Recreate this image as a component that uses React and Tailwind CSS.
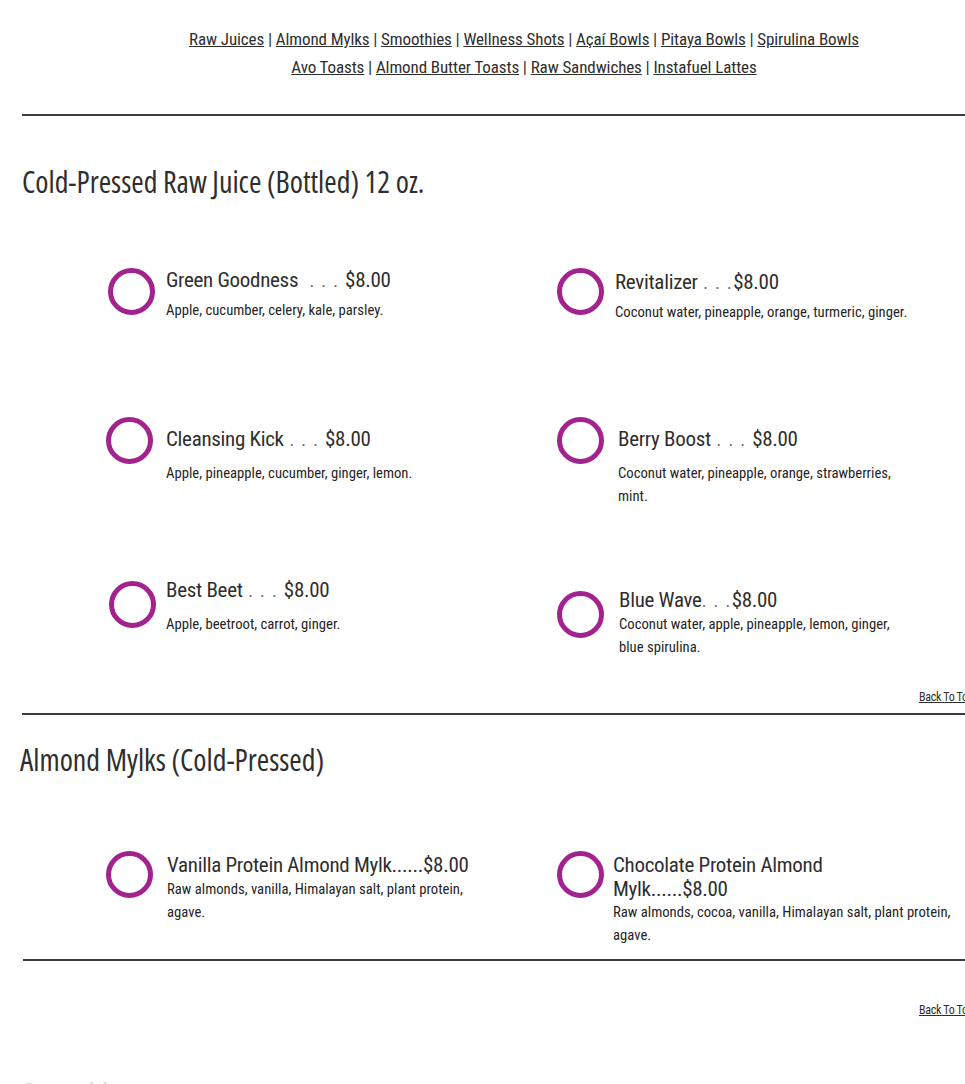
import React from "react";

const FONT = "font-['Roboto_Condensed','Roboto',sans-serif]";
const HEAD_FONT = "font-['Open_Sans',sans-serif] [font-stretch:75%]";

const NAV_ROWS = [
  ["Raw Juices", "Almond Mylks", "Smoothies", "Wellness Shots", "Açaí Bowls", "Pitaya Bowls", "Spirulina Bowls"],
  ["Avo Toasts", "Almond Butter Toasts", "Raw Sandwiches", "Instafuel Lattes"],
];

const SPACED = "text-[#6b6b6b] text-[18px] tracking-[1.5px]";
const SOLID = "text-[#2f2e2e]";

const JUICES = [
  { name: "Green Goodness", dots: "  . . . ", dotCls: SPACED, desc: ["Apple, cucumber, celery, kale, parsley."], circleMl: "ml-[2px]", circleMt: "mt-0", textMl: "ml-[11px]", textMt: "mt-0", descMt: "mt-[6px]" },
  { name: "Revitalizer", dots: " . . .", dotCls: SPACED, desc: ["Coconut water, pineapple, orange, turmeric, ginger."], circleMl: "ml-0", circleMt: "mt-0", textMl: "ml-[11px]", textMt: "mt-[2px]", descMt: "mt-[6px]" },
  { name: "Cleansing Kick", dots: " . . . ", dotCls: SPACED, desc: ["Apple, pineapple, cucumber, ginger, lemon."], circleMl: "ml-0", circleMt: "mt-0", textMl: "ml-[13px]", textMt: "mt-[10px]", descMt: "mt-[10px]" },
  { name: "Berry Boost", dots: " . . . ", dotCls: SPACED, desc: ["Coconut water, pineapple, orange, strawberries,", "mint."], circleMl: "ml-0", circleMt: "mt-0", textMl: "ml-[14px]", textMt: "mt-[10px]", descMt: "mt-[10px]" },
  { name: "Best Beet", dots: " . . . ", dotCls: SPACED, desc: ["Apple, beetroot, carrot, ginger."], circleMl: "ml-[3px]", circleMt: "mt-[3px]", textMl: "ml-[10px]", textMt: "mt-0", descMt: "mt-[10px]" },
  { name: "Blue Wave", dots: ". . .", dotCls: SPACED, desc: ["Coconut water, apple, pineapple, lemon, ginger,", "blue spirulina."], circleMl: "ml-0", circleMt: "mt-[13px]", textMl: "ml-[15px]", textMt: "mt-[10px]", descMt: "mt-0" },
];

const MYLKS = [
  { name: ["Vanilla Protein Almond Mylk"], dots: "......", dotCls: SOLID, desc: ["Raw almonds, vanilla, Himalayan salt, plant protein,", "agave."], circleMl: "ml-0", circleMt: "mt-0", textMl: "ml-[14px]", textMt: "mt-[2px]", descMt: "mt-[1px]" },
  { name: ["Chocolate Protein Almond", "Mylk"], dots: "......", dotCls: SOLID, desc: ["Raw almonds, cocoa, vanilla, Himalayan salt, plant protein,", "agave."], circleMl: "ml-0", circleMt: "mt-0", textMl: "ml-[9px]", textMt: "mt-[2px]", descMt: "mt-0" },
];

function Ring({ className }) {
  return (
    <div className={`w-[47px] h-[47px] shrink-0 rounded-full border-[5px] border-[#a3238e] ${className}`} />
  );
}

function MenuItem({ item }) {
  const nameLines = Array.isArray(item.name) ? item.name : [item.name];
  const last = nameLines.length - 1;
  return (
    <div className="flex items-start">
      <Ring className={`${item.circleMl} ${item.circleMt}`} />
      <div className={`${item.textMl} ${item.textMt} whitespace-nowrap`}>
        <p className="text-[21px] leading-[24px] tracking-[-0.3px] text-[#2f2e2e] whitespace-pre">
          {nameLines.map((l, i) => (
            <React.Fragment key={i}>
              {i > 0 && <br />}
              {l}
              {i === last && (
                <>
                  <span className={item.dotCls}>{item.dots}</span>
                  $8.00
                </>
              )}
            </React.Fragment>
          ))}
        </p>
        <p className={`text-[14.7px] leading-[23px] text-[#262525] ${item.descMt}`}>
          {item.desc.map((l, i) => (
            <React.Fragment key={i}>
              {i > 0 && <br />}
              {l}
            </React.Fragment>
          ))}
        </p>
      </div>
    </div>
  );
}

function Rule({ className = "" }) {
  return <div className={`h-[2px] bg-[#3c3c3c] ${className}`} />;
}

function BackToTop({ className = "" }) {
  return (
    <div className={`pl-[919px] text-[12px] leading-[16px] tracking-[-0.3px] whitespace-nowrap ${className}`}>
      <a href="#" className="underline text-[#2f2e2e]">Back To Top</a>
    </div>
  );
}

export default function App() {
  return (
    <div className={`w-[965px] h-[1084px] overflow-hidden bg-white ${FONT}`}>
      <div className="w-[980px]">
        <nav className="pt-[25px] pl-[68px] text-center text-[17px] leading-[28px] tracking-[-0.1px] text-[#2f2e2e]">
          {NAV_ROWS.map((row, r) => (
            <div key={r}>
              {row.map((label, i) => (
                <React.Fragment key={label}>
                  {i > 0 && <span> | </span>}
                  <a href="#" className="underline">{label}</a>
                </React.Fragment>
              ))}
            </div>
          ))}
        </nav>

        <Rule className="mt-[33px] ml-[22px]" />

        <h2 className={`mt-[48px] ml-[22px] text-[30px] leading-[36px] text-[#2f2e2e] ${HEAD_FONT}`}>
          Cold-Pressed Raw Juice (Bottled) 12 oz.
        </h2>

        <div className="mt-[68px] pl-[106px] grid grid-cols-[451px_1fr] grid-rows-[149px_161px_111px]">
          {JUICES.map((item) => (
            <MenuItem key={item.name} item={item} />
          ))}
        </div>

        <BackToTop />
        <Rule className="mt-[8px] ml-[22px]" />

        <h2 className={`mt-[27px] ml-[20px] text-[30px] leading-[36px] text-[#2f2e2e] ${HEAD_FONT}`}>
          Almond Mylks (Cold-Pressed)
        </h2>

        <div className="mt-[73px] pl-[106px] grid grid-cols-[451px_1fr] h-[108px]">
          {MYLKS.map((item) => (
            <MenuItem key={item.name[0]} item={item} />
          ))}
        </div>

        <Rule className="ml-[23px]" />
        <BackToTop className="mt-[41px]" />

        <h2 className={`mt-[58px] ml-[22px] text-[30px] leading-[36px] text-[#dadada] ${HEAD_FONT}`}>
          Smoothies
        </h2>
      </div>
    </div>
  );
}
